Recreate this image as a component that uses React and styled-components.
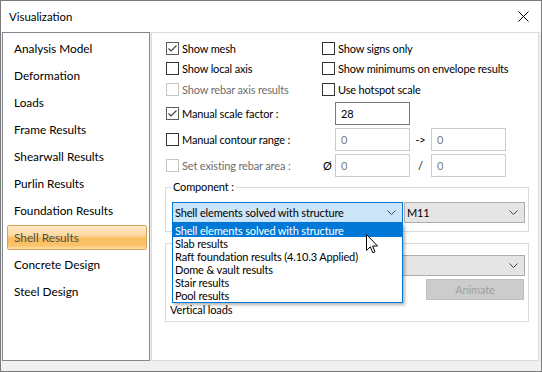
import React from 'react'
import styled, { createGlobalStyle } from 'styled-components'

const FONT = `"Segoe UI", Lato, "Liberation Sans", sans-serif`

const GlobalStyle = createGlobalStyle`
  html, body {
    margin: 0;
    padding: 0;
    background: #ffffff;
  }
  * {
    box-sizing: border-box;
  }
`

const Window = styled.div`
  position: relative;
  width: 542px;
  height: 372px;
  border: 1px solid #7a7a7a;
  display: flex;
  flex-direction: column;
  background: #f0f0f0;
  font-family: ${FONT};
  font-size: 11px;
  letter-spacing: -0.15px;
  color: #000;
  overflow: hidden;
`

const TitleBar = styled.div`
  flex: none;
  height: 31px;
  background: #fff;
  display: flex;
  align-items: center;
  justify-content: space-between;
  padding: 0 12px 0 8px;
`

const Title = styled.span`
  font-size: 11.4px;
  letter-spacing: 0;
  color: #000;
`

const Body = styled.div`
  flex: 1;
  display: flex;
  gap: 1px;
  padding: 0 2px 10px 1px;
`

const Nav = styled.ul`
  list-style: none;
  margin: 0;
  width: 148px;
  flex: none;
  background: #fff;
  border: 1px solid #828790;
  padding: 3px 0 0 4px;
  display: flex;
  flex-direction: column;
  gap: 2px;
  font-size: 11.8px;
  letter-spacing: 0;
`

const NavItem = styled.li`
  width: 140px;
  height: 25px;
  display: flex;
  align-items: center;
  padding-left: 6px;
  border: 1px solid ${p => (p.$active ? '#d9a55a' : 'transparent')};
  border-radius: 2px;
  color: ${p => (p.$active ? '#4f4f4f' : '#000')};
  background: ${p =>
    p.$active
      ? 'linear-gradient(to bottom, #fde9c8 0%, #fcd9a0 40%, #f8bc5c 55%, #fbc46a 85%, #fde0ae 100%)'
      : 'transparent'};
`

const Content = styled.div`
  flex: 1;
  background: #fff;
  border: 1px solid #dadada;
  padding: 5px 9px 0 13px;
  display: flex;
  flex-direction: column;
`

const Options = styled.div`
  display: grid;
  grid-template-columns: 156px auto;
  grid-template-rows: 20px 20px 22px 26px 26px 26px;
  align-items: center;
  padding-left: 1px;
`

const CheckRow = styled.label`
  display: flex;
  align-items: center;
  gap: 3px;
  white-space: nowrap;
  color: ${p => (p.$disabled ? '#6d6d6d' : '#000')};
`

const Box = styled.span`
  width: 13px;
  height: 13px;
  flex: none;
  border: 1px solid ${p => (p.$disabled ? '#c6c6c6' : p.$checked ? '#5c5c5c' : '#333')};
  background: #fff;
  display: flex;
  align-items: center;
  justify-content: center;
`

const Check = ({ checked, disabled }) => (
  <Box $checked={checked} $disabled={disabled}>
    {checked && (
      <svg width="11" height="11" viewBox="0 0 11 11">
        <polyline points="1.5,5.5 4,8 9.5,2.5" fill="none" stroke="#3c3c3c" strokeWidth="1.1" />
      </svg>
    )}
  </Box>
)

const Option = ({ label, checked, disabled }) => (
  <CheckRow $disabled={disabled}>
    <Check checked={checked} disabled={disabled} />
    {label}
  </CheckRow>
)

const Fields = styled.div`
  display: flex;
  align-items: center;
`

const Prefix = styled.span`
  width: 13px;
  text-align: left;
  padding-left: 1px;
`

const Sep = styled.span`
  width: 21px;
  text-align: center;
`

const Input = styled.div`
  width: 75px;
  height: 23px;
  display: flex;
  align-items: center;
  padding-left: 5px;
  border: 1px solid ${p => (p.$disabled ? '#cccccc' : '#7a7a7a')};
  color: ${p => (p.$disabled ? '#7d7d7d' : '#000')};
  background: #fff;
`

const Group = styled.fieldset`
  margin: ${p => p.$top}px 0 0 0;
  padding: ${p => p.$pad};
  border: 1px solid #dcdcdc;
  min-width: 0;
`

const Legend = styled.legend`
  padding: 0 2px 0 1px;
  line-height: 16px;
`

const SelectRow = styled.div`
  display: flex;
  gap: 1px;
`

const SelectWrap = styled.div`
  position: relative;
  width: ${p => p.$w};
  flex: ${p => (p.$grow ? 1 : 'none')};
`

const Select = styled.div`
  height: 21px;
  display: flex;
  align-items: center;
  justify-content: space-between;
  padding: 0 6px 0 2px;
  border: 1px solid ${p => (p.$focus ? '#0078d7' : '#adadad')};
  background: ${p => (p.$focus ? '#cce4f7' : '#e5e5e5')};
  white-space: nowrap;
`

const Chevron = () => (
  <svg width="9" height="5" viewBox="0 0 9 5">
    <polyline points="0.5,0.5 4.5,4.5 8.5,0.5" fill="none" stroke="#444" strokeWidth="1" />
  </svg>
)

const DropList = styled.ul`
  position: absolute;
  top: 100%;
  left: 0;
  width: 100%;
  margin: 0;
  padding: 0;
  list-style: none;
  background: #fff;
  border: 1px solid #0078d7;
  box-shadow: 2px 2px 3px rgba(0, 0, 0, 0.3);
  z-index: 2;
`

const DropItem = styled.li`
  height: 13px;
  line-height: 13px;
  padding-left: 2px;
  white-space: nowrap;
  background: ${p => (p.$active ? '#0078d7' : 'transparent')};
  color: ${p => (p.$active ? '#fff' : '#000')};
`

const ButtonRow = styled.div`
  display: flex;
  justify-content: flex-end;
  margin-top: 3px;
  padding-right: 1px;
`

const Button = styled.div`
  width: 98px;
  height: 21px;
  display: flex;
  align-items: center;
  justify-content: center;
  background: #cccccc;
  border: 1px solid #bfbfbf;
  color: #a0a0a0;
`

const Caption = styled.div`
  line-height: 16px;
  margin: 2px 0 0 -2px;
`

const Cursor = styled.svg`
  position: absolute;
  left: 365px;
  top: 233px;
  z-index: 5;
`

const navItems = [
  'Analysis Model',
  'Deformation',
  'Loads',
  'Frame Results',
  'Shearwall Results',
  'Purlin Results',
  'Foundation Results',
  'Shell Results',
  'Concrete Design',
  'Steel Design',
]

const components = [
  'Shell elements solved with structure',
  'Slab results',
  'Raft foundation results (4.10.3 Applied)',
  'Dome & vault results',
  'Stair results',
  'Pool results',
]

const App = () => {
  return (
    <>
      <GlobalStyle />
      <Window>
        <TitleBar>
          <Title>Visualization</Title>
          <svg width="11" height="11" viewBox="0 0 11 11">
            <path d="M0.5 0.5 L10.5 10.5 M10.5 0.5 L0.5 10.5" stroke="#000" strokeWidth="1" />
          </svg>
        </TitleBar>
        <Body>
          <Nav>
            {navItems.map(item => (
              <NavItem key={item} $active={item === 'Shell Results'}>
                {item}
              </NavItem>
            ))}
          </Nav>
          <Content>
            <Options>
              <Option label="Show mesh" checked />
              <Option label="Show signs only" />
              <Option label="Show local axis" />
              <Option label="Show minimums on envelope results" />
              <Option label="Show rebar axis results" disabled />
              <Option label="Use hotspot scale" />

              <Option label="Manual scale factor :" checked />
              <Fields>
                <Prefix />
                <Input>28</Input>
              </Fields>

              <Option label="Manual contour range :" />
              <Fields>
                <Prefix />
                <Input $disabled>0</Input>
                <Sep>-&gt;</Sep>
                <Input $disabled>0</Input>
              </Fields>

              <Option label="Set existing rebar area :" disabled />
              <Fields>
                <Prefix>Ø</Prefix>
                <Input $disabled>0</Input>
                <Sep>/</Sep>
                <Input $disabled>0</Input>
              </Fields>
            </Options>

            <Group $top={1} $pad="7px 3px 8px 6px">
              <Legend>Component :</Legend>
              <SelectRow>
                <SelectWrap $w="231px">
                  <Select $focus>
                    Shell elements solved with structure
                    <Chevron />
                  </Select>
                  <DropList>
                    {components.map((c, i) => (
                      <DropItem key={c} $active={i === 0}>
                        {c}
                      </DropItem>
                    ))}
                  </DropList>
                </SelectWrap>
                <SelectWrap $grow>
                  <Select>
                    M11
                    <Chevron />
                  </Select>
                </SelectWrap>
              </SelectRow>
            </Group>

            <Group $top={11} $pad="11px 3px 3px 6px">
              <Select>
                <span />
                <Chevron />
              </Select>
              <ButtonRow>
                <Button>Animate</Button>
              </ButtonRow>
              <Caption>Vertical loads</Caption>
            </Group>
          </Content>
        </Body>
        <Cursor width="13" height="20" viewBox="0 0 13 20">
          <path
            d="M0.5 0.5 L0.5 16.5 L4.3 12.8 L6.8 18.7 L9 17.8 L6.6 12 L11.5 12 Z"
            fill="#fff"
            stroke="#000"
            strokeWidth="1"
            strokeLinejoin="miter"
          />
        </Cursor>
      </Window>
    </>
  )
}

export default App
